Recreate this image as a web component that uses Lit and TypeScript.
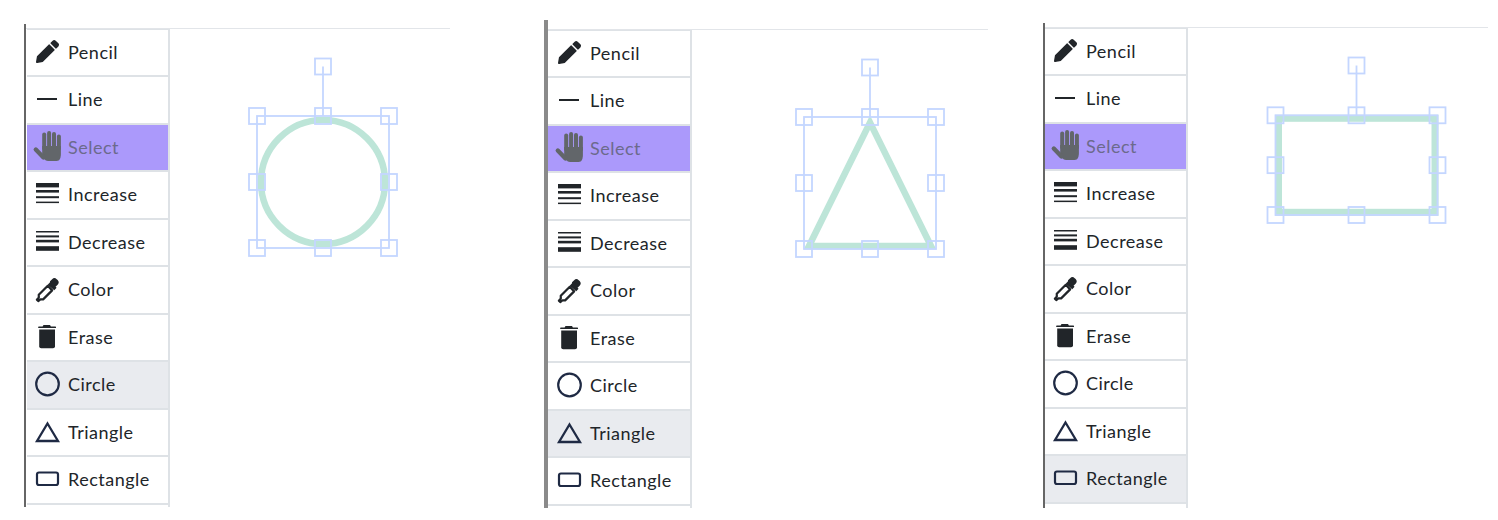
import { LitElement, html, css, svg } from "lit";
import { customElement } from "lit/decorators.js";

const ink = "#212529";
const navy = "#1f2a44";
const handFill = "#62666a";

const icons: Record<string, any> = {
  Pencil: svg`<g transform="translate(2,2) scale(.045)" fill="${ink}">
    <path d="M497.9 142.1l-46.1 46.1c-4.7 4.7-12.3 4.7-17 0l-111-111c-4.7-4.7-4.7-12.3 0-17l46.1-46.1c18.7-18.7 49.1-18.7 67.9 0l60.1 60.1c18.8 18.7 18.8 49.1 0 67.9z"/>
    <path d="M284.2 99.8L21.6 362.4.4 483.9c-2.9 16.4 11.4 30.6 27.8 27.8l121.5-21.3 262.6-262.6c4.7-4.7 4.7-12.3 0-17l-111-111c-4.8-4.7-12.4-4.7-17.1 0z"/></g>`,
  Line: svg`<rect x="3" y="13" width="20" height="2" fill="${ink}"/>`,
  Select: svg`<g fill="${handFill}">
    <rect x="8.200" y="-0.500" width="4" height="18" rx="2"/>
    <rect x="13.100" y="-2" width="4" height="19" rx="2"/>
    <rect x="18" y="-1" width="4" height="18" rx="2"/>
    <rect x="22.900" y="1.500" width="4" height="16" rx="2"/>
    <path d="M8.200 13H26.900V20.500C26.900 24.500 26 28 22.500 28H14C12.400 28 11.300 27.300 10.200 26L8.200 23.500z"/>
    <path d="M1.800 16.500L9.500 24.500" stroke="${handFill}" stroke-width="4.400" stroke-linecap="round" fill="none"/></g>`,
  Increase: svg`<g fill="${ink}"><rect x="2" y="3" width="23" height="4.4"/><rect x="2" y="10" width="23" height="2.6"/><rect x="2" y="16.2" width="23" height="2"/><rect x="2" y="21.6" width="23" height="1.5"/></g>`,
  Decrease: svg`<g fill="${ink}"><rect x="2" y="3" width="23" height="1.5"/><rect x="2" y="7.4" width="23" height="2"/><rect x="2" y="11.800" width="23" height="2.600"/><rect x="2" y="18.200" width="23" height="4.600"/></g>`,
  Color: svg`<g transform="translate(1.600,1.800) scale(1.060)">
    <path d="M13.600 4.200l2-2a3.100 3.100 0 0 1 4.300 0l.9.900a3.100 3.100 0 0 1 0 4.300l-2 2 1 1-2.200 2.200L11.400 7.400l2.200-2.200z" fill="${ink}"/>
    <path d="M11.500 8.500L3 17v2.600L1.200 21.600l1.300 1.300 2-1.600h2.600l8.500-8.500z" fill="none" stroke="${ink}" stroke-width="2.100" stroke-linejoin="round"/></g>`,
  Erase: svg`<g fill="${ink}"><path d="M9.500 2h6.500l.9 1.400H21.400a.6.6 0 0 1 .6.600v.9H4.200V4a.6.6 0 0 1 .6-.6H8.600z"/><path d="M5.200 6.400H21V23.200a2 2 0 0 1-2 2H7.200a2 2 0 0 1-2-2z"/></g>`,
  Circle: svg`<circle cx="13.500" cy="14" r="11.300" fill="none" stroke="${navy}" stroke-width="2.200"/>`,
  Triangle: svg`<path d="M13.500 5.500L24 23H3z" fill="none" stroke="${navy}" stroke-width="2.300" stroke-linejoin="miter"/>`,
  Rectangle: svg`<rect x="3" y="7.500" width="21" height="12.500" rx="2" fill="none" stroke="${navy}" stroke-width="2.200"/>`,
};

const tools = ["Pencil", "Line", "Select", "Increase", "Decrease", "Color", "Erase", "Circle", "Triangle", "Rectangle"];

interface Box { l: number; r: number; t: number; b: number; rot: number; }
interface Panel {
  cls: string;
  active: string;
  view: [number, number, number, number];
  box: Box;
  shape: any;
}

const mint = "#bde5d8";
const panels: Panel[] = [
  {
    cls: "one", active: "Circle", view: [170, 29, 280, 478],
    box: { l: 257, r: 389, t: 116, b: 248, rot: 66.500 },
    shape: svg`<circle cx="323" cy="182" r="62" fill="none" stroke="${mint}" stroke-width="6.500"/>`,
  },
  {
    cls: "two", active: "Triangle", view: [692, 30, 296, 478],
    box: { l: 804, r: 936, t: 117, b: 249, rot: 67.500 },
    shape: svg`<path d="M809 246L870 122.500L931 246Z" fill="none" stroke="${mint}" stroke-width="6.500"/>`,
  },
  {
    cls: "three", active: "Rectangle", view: [1188, 28, 300, 480],
    box: { l: 1275.500, r: 1437.500, t: 115.300, b: 215, rot: 65.500 },
    shape: svg`<rect x="1278.500" y="118.300" width="156.500" height="94" fill="none" stroke="${mint}" stroke-width="7"/>`,
  },
];

@customElement("app-root")
export class AppRoot extends LitElement {
  static styles = css`
    :host {
      display: flex;
      align-items: flex-start;
      width: 1498px;
      height: 520px;
      overflow: hidden;
      background: #fff;
      font-family: "Lato", "Liberation Sans", sans-serif;
      color: #212529;
    }
    .panel {
      display: flex;
      flex-direction: column;
      overflow: hidden;
      box-sizing: border-box;
      border-left: 2px solid #666;
      padding-top: 4px;
    }
    .one { margin: 24px 0 0 24px; width: 426px; height: 483px; }
    .two { margin: 20px 0 0 94px; width: 444px; height: 488px; padding-top: 9px; border-left: 4px solid #8a8a8a; }
    .three { margin: 23px 0 0 55px; width: 445px; height: 485px; }
    .body {
      flex: 1;
      min-height: 0;
      display: flex;
      border-top: 1px solid #e2e5e9;
    }
    .tools {
      flex: none;
      width: 141px;
      margin-left: 1px;
      padding-top: 0.500px;
      border-right: 2px solid #dee2e6;
      box-shadow: inset 0 1px #dee2e6;
    }
    .two .tools { margin-left: 0; width: 142px; }
    .three .tools { margin-left: 0; }
    .tool {
      box-sizing: border-box;
      height: 47.500px;
      display: flex;
      align-items: center;
      gap: 6px;
      padding: 0 0 1px 7px;
      border-bottom: 2px solid #dee2e6;
      font-size: 18px;
      letter-spacing: 0.500px;
    }
    .two .tool { padding-left: 8px; }
    .tool svg {
      flex: none;
      width: 28px;
      height: 28px;
      overflow: visible;
    }
    .select { background: #ab99fb; color: #6c6a8c; }
    .active { background: #e9ebef; }
    .canvas { flex: 1; min-width: 0; }
    .canvas svg { display: block; }
  `;

  private handles(b: Box) {
    const cx = (b.l + b.r) / 2;
    const cy = (b.t + b.b) / 2;
    const points = [
      [b.l, b.t], [cx, b.t], [b.r, b.t],
      [b.l, cy], [b.r, cy],
      [b.l, b.b], [cx, b.b], [b.r, b.b],
      [cx, b.rot],
    ];
    return svg`<g fill="none" stroke="#c4d6ff" stroke-width="1.800">
      <rect x="${b.l}" y="${b.t}" width="${b.r - b.l}" height="${b.b - b.t}"/>
      <line x1="${cx}" y1="${b.rot}" x2="${cx}" y2="${b.t}"/>
      ${points.map(([x, y]) => svg`<rect x="${x - 8}" y="${y - 8}" width="16" height="16"/>`)}
    </g>`;
  }

  render() {
    return panels.map(
      (p) => html`<section class="panel ${p.cls}">
        <div class="body">
          <div class="tools">
            ${tools.map(
              (t) => html`<div class="tool ${t === "Select" ? "select" : ""} ${t === p.active ? "active" : ""}">
                <svg viewBox="0 0 28 28">${icons[t]}</svg><span>${t}</span>
              </div>`
            )}
          </div>
          <div class="canvas">
            <svg width="${p.view[2]}" height="${p.view[3]}" viewBox="${p.view.join(" ")}">${p.shape}${this.handles(p.box)}</svg>
          </div>
        </div>
      </section>`
    );
  }
}
